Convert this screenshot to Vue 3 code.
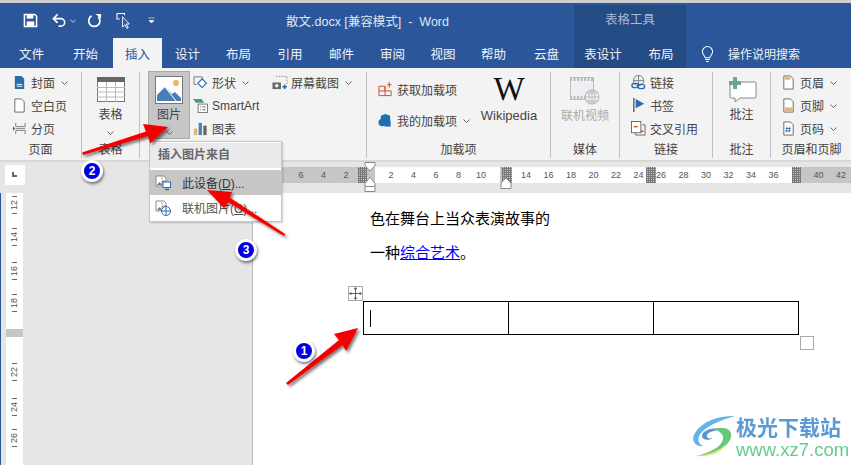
<script setup>
// ruler numbers and their positions
const unit = 11.25
const zero = 368.5
const rulerNums = [-6, -4, -2, 2, 4, 6, 8, 10, 14, 16, 18, 20, 22, 24, 26, 28, 30, 32, 34, 36, 40, 42].map((n) => ({
  label: Math.abs(n),
  left: zero + n * unit - 253
}))
const whiteParts = [
  { left: 375 - 253, width: 125 },
  { left: 512 - 253, width: 134 },
  { left: 656 - 253, width: 136 }
]
const hatchParts = [
  { left: 358 - 253, width: 9 },
  { left: 502 - 253, width: 10 },
  { left: 646 - 253, width: 10 },
  { left: 792 - 253, width: 9 }
]
const sideNums = [
  { label: '12', top: 3 },
  { label: '14', top: 35 },
  { label: '16', top: 69 },
  { label: '18', top: 101 },
  { label: '22', top: 170 },
  { label: '24', top: 205 },
  { label: '26', top: 236 }
]
const tabs = [
  { name: '文件', w: 53 }, { name: '开始', w: 55 }, { name: '插入', w: 49, active: true },
  { name: '设计', w: 51 }, { name: '布局', w: 51 }, { name: '引用', w: 52 }, { name: '邮件', w: 51 },
  { name: '审阅', w: 51 }, { name: '视图', w: 50 }, { name: '帮助', w: 51 }, { name: '云盘', w: 55 }
]
</script>

<template>
  <div class="app">
    <div class="top-line"></div>
    <div class="titlebar">
      <div class="qat">
        <svg class="q-icon" viewBox="0 0 16 16"><path d="M1.5 1.5h11l2 2v11h-13z" fill="none" stroke="#fff" stroke-width="1.6"/><rect x="4" y="2" width="7" height="4" fill="#fff"/><rect x="4" y="9" width="8" height="5" fill="#fff"/></svg>
        <svg class="q-icon undo" viewBox="0 0 16 16"><path d="M2 6h7.5a4 4 0 0 1 0 8H7" fill="none" stroke="#fff" stroke-width="1.7"/><path d="M6 1.5 1.5 6 6 10.5" fill="none" stroke="#fff" stroke-width="1.7"/></svg>
        <svg class="q-chev" viewBox="0 0 7 4"><path d="M.5.5l3 3 3-3" fill="none" stroke="#dfe6f0"/></svg>
        <svg class="q-icon redo" viewBox="0 0 16 16"><path d="M5 3a6 6 0 1 0 7 1" fill="none" stroke="#fff" stroke-width="1.9"/><path d="M9 1h6v4.500z" fill="#fff"/></svg>
        <svg class="q-icon touch" viewBox="0 0 18 18"><path d="M1 1.500h8v2M1 1.500v6h3" fill="none" stroke="#fff" stroke-width="1.100"/><path d="M7 5v11l2.500-2.500 2 4 1.500-.800-2-4H14z" fill="#2b579a" stroke="#fff"/></svg>
        <svg class="q-more" viewBox="0 0 7 7"><path d="M.5 1h6M1 3.500h5l-2.500 2.500z" fill="#fff" stroke="#fff" stroke-width=".6"/></svg>
      </div>
      <div class="doc-title">散文.docx [兼容模式]&nbsp;&nbsp;-&nbsp;&nbsp;Word</div>
      <div class="tool-title">表格工具</div>
    </div>
    <div class="tabs">
      <div v-for="t in tabs" :key="t.name" class="tab" :class="{ active: t.active }" :style="{ width: t.w + 'px' }">{{ t.name }}</div>
      <div class="tool-tabs">
        <div class="tab tool-a">表设计</div>
        <div class="tab tool-b">布局</div>
      </div>
      <svg class="bulb" viewBox="0 0 14 18"><path d="M4.500 12.500C4 10 1.500 9 1.500 6a5.500 5.500 0 0 1 11 0c0 3-2.500 4-3 6.500zM4.500 14.500h5M5.500 16.500h3" fill="none" stroke="#fff" stroke-width="1.100"/></svg>
      <div class="search">操作说明搜索</div>
    </div>

    <div class="ribbon">
      <div class="group g-page">
        <div class="stack">
          <div class="row">
            <svg class="ic" viewBox="0 0 14 16"><path d="M2 1h7l3 3v11H2z" fill="#2b6cb0"/><path d="M4 10h6M4 12h6" stroke="#fff"/></svg><span>封面</span>
            <svg class="chev side" viewBox="0 0 7 4"><path d="M.5.5l3 3 3-3"/></svg>
          </div>
          <div class="row">
            <svg class="ic" viewBox="0 0 14 16"><path d="M2 1h7l3 3v11H2z" fill="#fff" stroke="#666"/></svg><span>空白页</span>
          </div>
          <div class="row">
            <svg class="ic" viewBox="0 0 14 16"><path d="M3 2v4h10V2M3 14v-4h10v4" fill="none" stroke="#777"/><path d="M0 5.500l2.500 2.500L0 10.500z" fill="#2b6cb0"/><path d="M3 8h10" stroke="#888"/></svg><span>分页</span>
          </div>
        </div>
        <div class="group-label">页面</div>
      </div>

      <div class="group g-table">
        <div class="big">
          <svg class="big-ic table-ic" viewBox="0 0 28 25">
            <rect x=".5" y=".5" width="27" height="24" fill="#fff" stroke="#777"/>
            <rect x="0" y="0" width="28" height="5" fill="#666"/>
            <path d="M0 10.500h28M0 15h28M0 20h28M9.500 5v20M18.500 5v20" stroke="#b9b9b9"/>
          </svg>
          <span class="big-text">表格</span>
          <svg class="chev" viewBox="0 0 7 4"><path d="M.5.5l3 3 3-3"/></svg>
        </div>
        <div class="group-label">表格</div>
      </div>

      <div class="group g-illus">
        <div class="illus-body">
          <div class="big pic-btn">
            <svg class="big-ic pic-ic" viewBox="0 0 28 28">
              <rect x=".5" y=".5" width="27" height="27" fill="#fff" stroke="#777"/>
              <circle cx="21" cy="7" r="3" fill="#e8b765"/>
              <path d="M2 25v-6l8-8 7 7 3-2 6 6v3z" fill="#4a7fb5"/>
              <path d="M10 11l11 14" stroke="#fff" stroke-width="1"/>
            </svg>
            <span class="big-text">图片</span>
            <svg class="chev" viewBox="0 0 7 4"><path d="M.5.5l3 3 3-3"/></svg>
          </div>
          <div class="stack illus-col">
            <div class="row">
              <svg class="ic" viewBox="0 0 16 16"><path d="M1 2h9v4" fill="none" stroke="#777"/><path d="M1 2v8h3" fill="none" stroke="#777"/><rect x="6.500" y="5.500" width="6.500" height="6.500" transform="rotate(45 9.750 8.750)" fill="#fff" stroke="#2b6cb0" stroke-width="1.200"/></svg><span>形状</span>
              <svg class="chev side" viewBox="0 0 7 4"><path d="M.5.5l3 3 3-3"/></svg>
            </div>
            <div class="row">
              <svg class="ic" viewBox="0 0 16 16"><path d="M0 1h9l3 4H3z" fill="#4f9a83"/><rect x="5.500" y="6.500" width="10" height="9" fill="#fff" stroke="#777"/><path d="M7.500 9.500h1M7.500 12.500h1M10 9.500h3.500M10 12.500h3.500" stroke="#666"/></svg><span>SmartArt</span>
            </div>
            <div class="row">
              <svg class="ic" viewBox="0 0 16 16"><rect x="1" y="8" width="3.500" height="7" fill="#e2b673"/><rect x="6" y="2" width="3.500" height="13" fill="#4a7fb5"/><rect x="11" y="5" width="3.500" height="10" fill="#666"/></svg><span>图表</span>
            </div>
          </div>
          <div class="stack shot-col">
            <div class="row">
              <svg class="ic wide" viewBox="0 0 18 16"><path d="M5 1.500h11.500v9" fill="none" stroke="#888" stroke-dasharray="1.500 1.500"/><rect x="1" y="8" width="9" height="7" fill="#666"/><circle cx="5.500" cy="11.500" r="1.800" fill="#fff"/><path d="M14 10v5M11.500 12.500h5" stroke="#2b6cb0" stroke-width="1.800"/></svg><span>屏幕截图</span>
              <svg class="chev side" viewBox="0 0 7 4"><path d="M.5.5l3 3 3-3"/></svg>
            </div>
          </div>
        </div>
        <div class="group-label">插图</div>
      </div>

      <div class="group g-addins">
        <div class="addins-body">
          <div class="addin-col">
            <div class="row">
              <svg class="ic" viewBox="0 0 16 16"><path d="M1 4.500h6.500v10H1zM1 9.500h13v5H7.500M7.500 4.500v5M12 0v6M9.500 3h5" fill="none" stroke="#d24726" stroke-width="1"/></svg><span>获取加载项</span>
            </div>
            <div class="row">
              <svg class="ic" viewBox="0 0 16 16"><path d="M8 1l5 2v5l-5 2-5-2V3z" fill="#1f6fb5"/><circle cx="4.500" cy="10" r="4" fill="#1f6fb5"/><rect x="7" y="8" width="6.500" height="6.500" fill="#1f6fb5"/></svg><span>我的加载项</span>
              <svg class="chev side addin-chev" viewBox="0 0 7 4"><path d="M.5.5l3 3 3-3"/></svg>
            </div>
          </div>
          <div class="big wiki">
            <span class="wiki-w">W</span>
            <span class="big-text">Wikipedia</span>
          </div>
        </div>
        <div class="group-label">加载项</div>
      </div>

      <div class="group g-media">
        <div class="big">
          <svg class="big-ic video-ic" viewBox="0 0 30 28">
            <rect x=".5" y=".5" width="23" height="22" fill="#f0edf3" stroke="#bbb"/>
            <path d="M0 2.500h24M0 20.500h24" stroke="#bbb" stroke-width="3" stroke-dasharray="2 1.500"/>
            <circle cx="22" cy="20" r="7" fill="#f3f3f3" stroke="#bbb" stroke-width="1.200"/>
            <path d="M15 20h14M22 13v14M17 16h10M17 24h10" stroke="#bbb"/>
            <ellipse cx="22" cy="20" rx="3" ry="7" fill="none" stroke="#bbb"/>
          </svg>
          <span class="big-text muted">联机视频</span>
        </div>
        <div class="group-label">媒体</div>
      </div>

      <div class="group g-links">
        <div class="stack">
          <div class="row">
            <svg class="ic" viewBox="0 0 16 16"><circle cx="8" cy="6" r="5.500" fill="none" stroke="#777"/><path d="M2.500 6h11M8 .500v11" stroke="#777"/><rect x="1" y="9" width="7" height="4.500" rx="2.200" fill="none" stroke="#2b6cb0" stroke-width="1.500"/><rect x="7.500" y="10" width="7" height="4.500" rx="2.200" fill="none" stroke="#2b6cb0" stroke-width="1.500"/></svg><span>链接</span>
          </div>
          <div class="row">
            <svg class="ic" viewBox="0 0 16 16"><path d="M3 0v15" stroke="#666" stroke-width="1.600"/><path d="M5 1l9 5-9 5z" fill="#2b6cb0"/></svg><span>书签</span>
          </div>
          <div class="row">
            <svg class="ic" viewBox="0 0 16 16"><rect x=".5" y=".5" width="10" height="12" fill="#fff" stroke="#666"/><path d="M3 6h4" stroke="#d24726" stroke-width="1.600"/><path d="M12 4h3v11H5v-2" fill="none" stroke="#666"/><path d="M10.500 11h3" stroke="#d24726" stroke-width="1.600"/></svg><span>交叉引用</span>
          </div>
        </div>
        <div class="group-label">链接</div>
      </div>

      <div class="group g-comment">
        <div class="big">
          <svg class="big-ic comment-ic" viewBox="0 0 30 26">
            <path d="M3 5h25a1 1 0 0 1 1 1v14a1 1 0 0 1-1 1H13l-5 4v-4H4a1 1 0 0 1-1-1z" fill="#fff" stroke="#888"/>
            <path d="M6 0h4v4h4v4h-4v4H6V8H2V4h4z" fill="#6ea58f"/>
          </svg>
          <span class="big-text">批注</span>
        </div>
        <div class="group-label">批注</div>
      </div>

      <div class="group g-head">
        <div class="stack">
          <div class="row">
            <svg class="ic" viewBox="0 0 14 16"><path d="M2 1h7l3 3v11H2z" fill="#fff" stroke="#666"/><rect x="3" y="2" width="6" height="3" fill="#e2b673"/></svg><span>页眉</span>
            <svg class="chev side" viewBox="0 0 7 4"><path d="M.5.5l3 3 3-3"/></svg>
          </div>
          <div class="row">
            <svg class="ic" viewBox="0 0 14 16"><path d="M2 1h7l3 3v11H2z" fill="#fff" stroke="#666"/><rect x="3" y="10" width="8" height="4" fill="#e2b673"/></svg><span>页脚</span>
            <svg class="chev side" viewBox="0 0 7 4"><path d="M.5.5l3 3 3-3"/></svg>
          </div>
          <div class="row">
            <svg class="ic" viewBox="0 0 14 16"><path d="M2 1h7l3 3v11H2z" fill="#fff" stroke="#666"/><path d="M5.500 6l-1 6M8.500 6l-1 6M4 8h5.500M3.700 10.500h5.500" stroke="#2b6cb0" stroke-width=".9"/></svg><span>页码</span>
            <svg class="chev side" viewBox="0 0 7 4"><path d="M.5.5l3 3 3-3"/></svg>
          </div>
        </div>
        <div class="group-label">页眉和页脚</div>
      </div>
    </div>

    <div class="ruler-row">
      <div class="corner"><span class="corner-mark"></span></div>
      <div class="h-ruler">
        <div class="h-bar">
          <div v-for="p in whiteParts" :key="p.left" class="h-white" :style="{ left: p.left + 'px', width: p.width + 'px' }"></div>
          <div v-for="p in hatchParts" :key="p.left" class="h-hatch" :style="{ left: p.left + 'px', width: p.width + 'px' }"></div>
          <span v-for="n in rulerNums" :key="n.left" class="h-num" :style="{ left: n.left + 'px' }">{{ n.label }}</span>
        </div>
        <svg class="indent ind-left" viewBox="0 0 12 30"><path d="M1 .5h10v3L6 9 1 3.500zM1 21.500 6 15l5 6.500v3H1zM1 24.500h10v5H1z" fill="#fff" stroke="#888"/></svg>
        <svg class="indent ind-right" viewBox="0 0 12 12"><path d="M1 11.500V6l5-5 5 5v5.500z" fill="#fff" stroke="#888"/></svg>
      </div>
    </div>

    <div class="work">
      <div class="v-ruler">
        <div class="v-mark"></div>
        <div v-for="s in sideNums" :key="s.label" class="v-num" :style="{ top: s.top + 'px' }">
          <i></i><span>{{ s.label }}</span><i></i>
        </div>
      </div>
      <div class="gutter"></div>
      <div class="page">
        <p class="line">色在舞台上当众表演故事的</p>
        <p class="line">一种<a class="link">综合艺术</a>。</p>
        <div class="word-table">
          <div class="handle">
            <svg viewBox="0 0 14 14"><path d="M7 1v12M1 7h12" stroke="#555"/><path d="M7 0l2 2.500H5zM7 14l2-2.500H5zM0 7l2.500-2v4zM14 7l-2.500-2v4z" fill="#555"/></svg>
          </div>
          <div class="cell"><span class="caret"></span></div>
          <div class="cell"></div>
          <div class="cell"></div>
          <div class="resize"></div>
        </div>
      </div>
    </div>

    <!-- 插入图片来自 菜单 -->
    <div class="menu">
      <div class="menu-head">插入图片来自</div>
      <div class="menu-item on">
        <svg class="menu-ic" viewBox="0 0 16 16"><path d="M1 1h8l2 2v3H7v5H1z" fill="#fff" stroke="#888"/><path d="M2 10l2.500-3L7 10z" fill="#4a7fb5"/><circle cx="7" cy="3.500" r="1" fill="#e2b673"/><rect x="8" y="7" width="7.500" height="5.500" fill="#fff" stroke="#2b6cb0"/><path d="M10 14.500h4" stroke="#2b6cb0" stroke-width="1.500"/></svg>
        <span>此设备(<u>D</u>)...</span>
      </div>
      <div class="menu-item">
        <svg class="menu-ic" viewBox="0 0 16 16"><path d="M1 1h8l2 2v3H7v5H1z" fill="#fff" stroke="#888"/><path d="M2 10l2.500-3L7 10z" fill="#4a7fb5"/><circle cx="7" cy="3.500" r="1" fill="#e2b673"/><circle cx="11" cy="11" r="4.500" fill="#fff" stroke="#2b6cb0"/><path d="M6.500 11h9M11 6.500v9" stroke="#2b6cb0"/></svg>
        <span>联机图片(<u>O</u>)...</span>
      </div>
    </div>

    <!-- 红色箭头 -->
    <svg class="arrows" viewBox="0 0 851 465">
      <defs>
        <filter id="sh" x="-20%" y="-40%" width="140%" height="180%">
          <feDropShadow dx="2" dy="2" stdDeviation="1.500" flood-color="#000" flood-opacity=".55"/>
        </filter>
      </defs>
      <g fill="#f40000" filter="url(#sh)">
        <path d="M82 152.500 146 131.500 143 124 168 127 150 143.500 148.500 136 83 155z"/>
        <path d="M284 236 228 202 224 208 207 190 232 192 229.500 197.500 285 234z"/>
        <path d="M286 383 339 340 334 334 358 328 346 351 342.500 345 288 385z"/>
      </g>
    </svg>

    <div class="badge b-two">2</div>
    <div class="badge b-three">3</div>
    <div class="badge b-one">1</div>

    <div class="mark">
      <svg class="mark-logo" viewBox="0 0 44 42">
        <path d="M43 1C26 1 9 6 2 20c-3 7 3 12 9 11-6-3-6-9-1-14C18 9 30 5 43 1z" fill="#62b4ea"/>
        <path d="M30 15c-8-4-20 0-20 6 0 4 7 5 11 2-3 1-7 0-6-3 1-3 8-5 15-5z" fill="#5f93d0"/>
        <path d="M22 14c9-3 19 0 17 8-2 9-16 18-35 19 16-4 26-10 27-17 1-5-4-8-9-10z" fill="#66c878"/>
        <path d="M4 41c14-2 24-6 30-12-4 8-15 13-30 12z" fill="#d5e46e"/>
      </svg>
      <div class="mark-text">
        <div class="mark-cn">极光下载站</div>
        <div class="mark-en">www.xz7.com</div>
      </div>
    </div>
  </div>
</template>

<style>
html, body {
  margin: 0;
  padding: 0;
  overflow: hidden;
}
</style>

<style scoped>
.app {
  position: relative;
  width: 851px;
  height: 465px;
  overflow: hidden;
  display: flex;
  flex-direction: column;
  background: #e6e6e6;
  font-family: "Liberation Sans", "Noto Sans CJK SC", sans-serif;
  font-size: 12px;
  color: #444;
}

.top-line {
  height: 3px;
  background: #cfcfcf;
  flex: none;
}

.titlebar {
  height: 35px;
  flex: none;
  background: #2b579a;
  display: flex;
  align-items: center;
  color: #dfe6f0;
}

.qat {
  width: 286px;
  flex: none;
  display: flex;
  align-items: center;
  padding-left: 23px;
  box-sizing: border-box;
}

.q-icon {
  width: 15px;
  height: 15px;
  flex: none;
}

.undo {
  margin-left: 14px;
}

.q-chev {
  width: 6px;
  height: 4px;
  margin-left: 3px;
}

.redo {
  margin-left: 11px;
}

.touch {
  margin-left: 14px;
  width: 17px;
  height: 17px;
}

.q-more {
  width: 7px;
  height: 7px;
  margin-left: 15px;
}

.doc-title {
  width: 288px;
  flex: none;
  font-size: 12.5px;
  white-space: nowrap;
}

.tool-title {
  width: 112px;
  align-self: flex-end;
  height: 33px;
  line-height: 31px;
  background: #234b84;
  text-align: center;
  color: #a9bbd4;
  font-size: 12.5px;
}

.tabs {
  height: 30px;
  flex: none;
  background: #2b579a;
  display: flex;
  align-items: stretch;
  padding-left: 5px;
  color: #f0f3f8;
}

.tab {
  flex: none;
  text-align: center;
  line-height: 34px;
  font-size: 12.5px;
}

.tab.active {
  background: #f3f3f3;
  color: #2b579a;
}

.tool-tabs {
  width: 112px;
  flex: none;
  display: flex;
  background: #234b84;
}

.tool-a {
  width: 58px;
}

.tool-b {
  width: 54px;
  padding-left: 4px;
  box-sizing: border-box;
}

.bulb {
  width: 13px;
  height: 17px;
  margin: 8px 0 0 15px;
}

.search {
  margin-left: 14px;
  line-height: 34px;
  font-size: 12px;
}

.ribbon {
  height: 94px;
  flex: none;
  display: flex;
  background: #f3f3f3;
  border-bottom: 2px solid #d8d8d8;
  box-sizing: border-box;
  padding-top: 4px;
}

.group {
  position: relative;
  flex: none;
  height: 86px;
  display: flex;
  flex-direction: column;
  border-right: 1px solid #c0c0c0;
  box-sizing: border-box;
}

.group-label {
  position: absolute;
  left: 0;
  right: 0;
  bottom: 0;
  text-align: center;
  line-height: 16px;
}

.g-page { width: 82px; padding-left: 12px; }
.g-table { width: 58px; }
.g-illus { width: 227px; padding-left: 8px; }
.g-addins { width: 184px; padding-left: 11px; }
.g-media { width: 69px; }
.g-links { width: 93px; padding-left: 11px; }
.g-comment { width: 58px; }
.g-head { width: 81px; padding-left: 10px; border-right: 0; }

.stack {
  display: flex;
  flex-direction: column;
  gap: 6px;
  padding-top: 2px;
}

.row {
  display: flex;
  align-items: center;
  height: 17px;
  white-space: nowrap;
}

.ic {
  width: 15px;
  height: 15px;
  flex: none;
  margin-right: 4px;
}

.ic.wide {
  width: 18px;
  margin-right: 2px;
}

.chev {
  width: 7px;
  height: 4px;
  fill: none;
  stroke: #666;
  flex: none;
}

.chev.side {
  margin-left: 6px;
}

.big {
  display: flex;
  flex-direction: column;
  align-items: center;
}

.big-text {
  line-height: 16px;
}

.big-ic {
  flex: none;
}

.table-ic {
  width: 28px;
  height: 25px;
  margin: 5px 0 5px;
}

.big .chev {
  margin-top: 8px;
}

.illus-body {
  display: flex;
}

.pic-btn {
  width: 42px;
  height: 68px;
  box-sizing: border-box;
  margin-top: -1px;
  background: #c6c6c6;
  border: 1px solid #a9a9a9;
}

.pic-ic {
  width: 28px;
  height: 28px;
  margin: 4px 0 3px;
}

.illus-col {
  margin-left: 3px;
  width: 78px;
}

.shot-col {
  width: 90px;
}

.addins-body {
  display: flex;
}

.addin-col {
  display: flex;
  flex-direction: column;
  gap: 14px;
  padding-top: 9px;
  width: 102px;
}

.addin-chev {
  margin-left: 10px;
}

.wiki-w {
  font-family: "Liberation Serif", serif;
  font-size: 33px;
  line-height: 34px;
  color: #111;
  margin-top: 0;
}

.wiki {
  width: 58px;
}

.wiki .big-text {
  font-size: 13px;
  margin-top: 2px;
}

.video-ic {
  width: 30px;
  height: 28px;
  margin: 5px 0 3px;
}

.muted {
  color: #aaa;
}

.comment-ic {
  width: 30px;
  height: 26px;
  margin: 5px 0 4px;
}

.ruler-row {
  height: 31px;
  flex: none;
  display: flex;
}

.corner {
  width: 20px;
  height: 20px;
  margin: 3px 0 0 5px;
  background: #fff;
  position: relative;
  flex: none;
}

.corner-mark {
  position: absolute;
  left: 7px;
  top: 7px;
  width: 5px;
  height: 5px;
  border-left: 2px solid #666;
  border-bottom: 2px solid #666;
  box-sizing: border-box;
}

.h-ruler {
  position: relative;
  margin-left: 228px;
  flex: 1;
}

.h-bar {
  position: absolute;
  left: 0;
  right: 0;
  top: 5px;
  height: 16px;
  background: #c6c6c6;
}

.h-white {
  position: absolute;
  top: 0;
  height: 16px;
  background: #fff;
}

.h-hatch {
  position: absolute;
  top: 0;
  height: 16px;
  background:
    repeating-linear-gradient(90deg, #777 0 1px, transparent 1px 2px),
    repeating-linear-gradient(0deg, #777 0 1px, #c6c6c6 1px 2px);
}

.h-num {
  position: absolute;
  top: 0;
  width: 20px;
  margin-left: -10px;
  text-align: center;
  font-size: 9px;
  line-height: 16px;
  color: #555;
}

.indent {
  position: absolute;
}

.ind-left {
  left: 111px;
  top: 0;
  width: 12px;
  height: 30px;
}

.ind-right {
  left: 247px;
  top: 15px;
  width: 12px;
  height: 12px;
}

.work {
  flex: 1;
  display: flex;
  border-left: 1px solid #2b579a;
  min-height: 0;
}

.v-ruler {
  position: relative;
  width: 17px;
  margin-left: 5px;
  background: #fff;
  flex: none;
}

.v-mark {
  position: absolute;
  left: 0;
  right: 0;
  top: 136px;
  height: 8px;
  background: #c6c6c6;
}

.v-num {
  position: absolute;
  left: 0;
  width: 17px;
  display: flex;
  flex-direction: column;
  align-items: center;
  gap: 3px;
  font-size: 9px;
  color: #555;
}

.v-num span {
  transform: rotate(-90deg);
  line-height: 10px;
}

.v-num i {
  width: 5px;
  height: 1px;
  background: #666;
}

.gutter {
  width: 229px;
  flex: none;
  border-right: 1px solid #bdbdbd;
}

.page {
  flex: 1;
  background: #fff;
  padding: 8px 0 0 117px;
  color: #000;
  font-size: 15px;
}

.line {
  margin: 0;
  line-height: 34px;
  font-family: "Noto Sans CJK SC", sans-serif;
}

.link {
  color: #0000ff;
  text-decoration: underline;
}

.word-table {
  position: relative;
  width: 436px;
  height: 34px;
  margin: 32px 0 0 -7px;
  display: flex;
  box-sizing: border-box;
  border: 1px solid #000;
}

.cell {
  flex: 1;
  border-right: 1px solid #000;
  display: flex;
  align-items: center;
  padding-left: 6px;
}

.cell:nth-child(4) {
  border-right: 0;
}

.caret {
  width: 1px;
  height: 17px;
  background: #000;
}

.handle {
  position: absolute;
  left: -16px;
  top: -16px;
  width: 15px;
  height: 15px;
  box-sizing: border-box;
  border: 1px solid #aaa;
  background: #fff;
  padding: 0;
  display: flex;
}

.handle svg {
  width: 13px;
  height: 13px;
}

.resize {
  position: absolute;
  right: -16px;
  bottom: -16px;
  width: 14px;
  height: 14px;
  box-sizing: border-box;
  border: 1px solid #aaa;
}

.menu {
  position: absolute;
  left: 149px;
  top: 141px;
  width: 133px;
  height: 81px;
  box-sizing: border-box;
  background: #fff;
  border: 1px solid #c6c6c6;
  box-shadow: 1px 1px 2px rgba(0, 0, 0, 0.2);
  padding-top: 1px;
}

.menu-head {
  height: 25px;
  line-height: 25px;
  background: #eaeaea;
  padding-left: 8px;
  color: #666;
  font-weight: bold;
}

.menu-item {
  display: flex;
  align-items: center;
  height: 25px;
  padding-left: 5px;
  color: #555;
  white-space: nowrap;
}

.menu-item.on {
  margin-top: 2px;
  background: #c6c6c6;
  color: #333;
}

.menu-ic {
  width: 16px;
  height: 16px;
  margin-right: 11px;
  flex: none;
}

.arrows {
  position: absolute;
  left: 0;
  top: 0;
  width: 851px;
  height: 465px;
  pointer-events: none;
}

.badge {
  position: absolute;
  width: 16px;
  height: 16px;
  box-sizing: content-box;
  border: 3px solid #fff;
  border-radius: 50%;
  background: #0000e6;
  color: #fff;
  font-weight: bold;
  font-size: 12px;
  line-height: 16px;
  text-align: center;
  box-shadow: 1px 2px 3px rgba(0, 0, 0, 0.5);
}

.b-two { left: 81px; top: 160px; }
.b-three { left: 235px; top: 239px; }
.b-one { left: 293px; top: 340px; }

.mark {
  position: absolute;
  left: 692px;
  top: 415px;
  display: flex;
  filter: blur(0.3px);
}

.mark-logo {
  width: 44px;
  height: 42px;
  flex: none;
}

.mark-cn {
  font-size: 21px;
  line-height: 25px;
  font-weight: bold;
  color: #5b9bd5;
  white-space: nowrap;
}

.mark-en {
  font-size: 18.5px;
  line-height: 19px;
  color: #63cc8b;
  white-space: nowrap;
}
</style>
